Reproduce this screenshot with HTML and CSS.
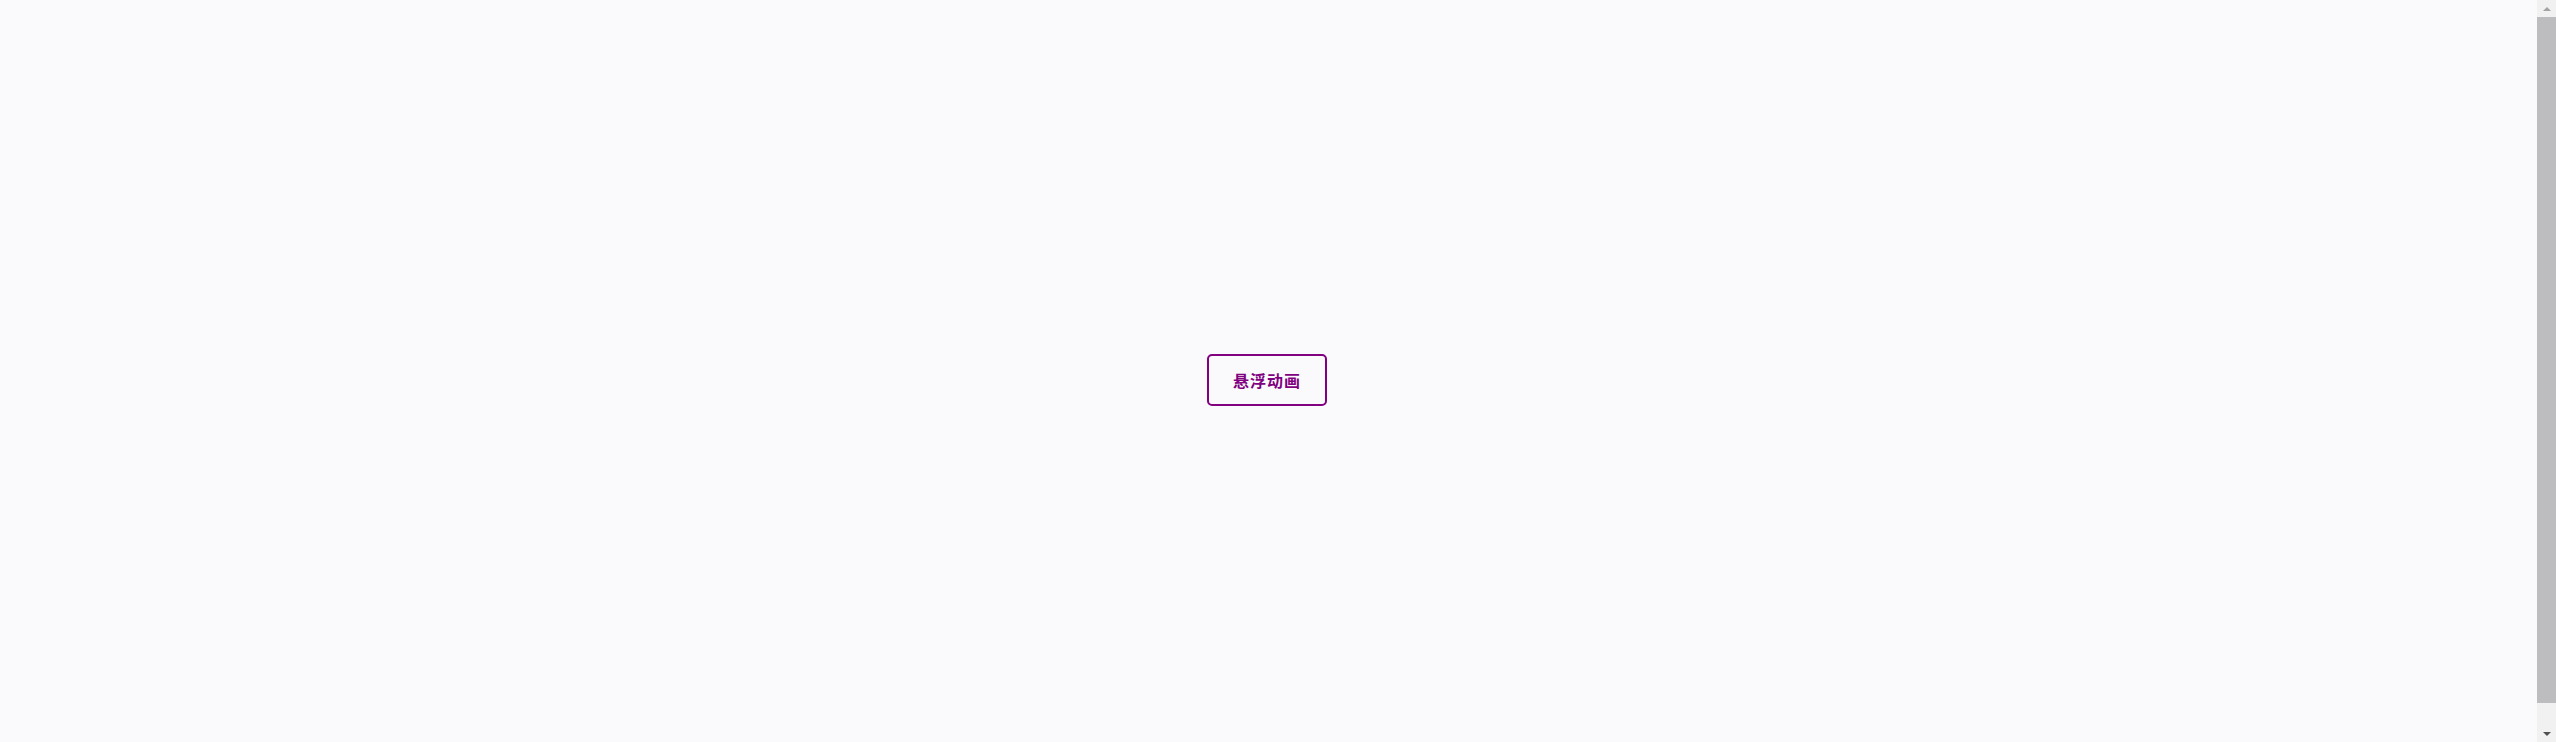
FILE: index.html
```html
<!DOCTYPE html>
<html lang="zh">
<head>
<meta charset="utf-8">
<title>悬浮动画</title>
<link rel="stylesheet" href="styles.css">
</head>
<body>
<main class="stage">
  <button class="hover-btn">悬浮动画</button>
</main>
<aside class="scrollbar" aria-hidden="true">
  <div class="sb-btn sb-up"><span class="tri tri-up"></span></div>
  <div class="sb-track">
    <div class="sb-thumb"></div>
  </div>
  <div class="sb-btn sb-down"><span class="tri tri-down"></span></div>
</aside>
</body>
</html>
```

FILE: styles.css
```css
html, body {
  height: 100%;
  margin: 0;
  overflow: hidden;
}
body {
  display: flex;
  background: #fafafc;
}
.stage {
  flex: 1;
  display: flex;
  align-items: center;
  justify-content: center;
  padding: 18px 11px 0 8px;
}
.hover-btn {
  font-family: "Noto Sans CJK SC", "Noto Sans", sans-serif;
  font-size: 16px;
  font-weight: 700;
  letter-spacing: 1px;
  color: #800080;
  background: transparent;
  border: 2px solid #800080;
  border-radius: 5px;
  padding: 12px 24px;
  line-height: 24px;
  cursor: pointer;
}
.scrollbar {
  width: 19px;
  display: flex;
  flex-direction: column;
  background: #f1f1f1;
}
.sb-btn {
  height: 17px;
  display: flex;
  align-items: center;
  justify-content: center;
}
.sb-track {
  flex: 1;
  display: flex;
  flex-direction: column;
  padding-bottom: 22px;
}
.sb-thumb {
  flex: 1;
  background: #bdbdc0;
}
.tri {
  width: 0;
  height: 0;
  border-left: 4px solid transparent;
  border-right: 4px solid transparent;
}
.tri-up {
  border-bottom: 4px solid #a3a3a3;
}
.tri-down {
  border-top: 4px solid #505050;
}
```
